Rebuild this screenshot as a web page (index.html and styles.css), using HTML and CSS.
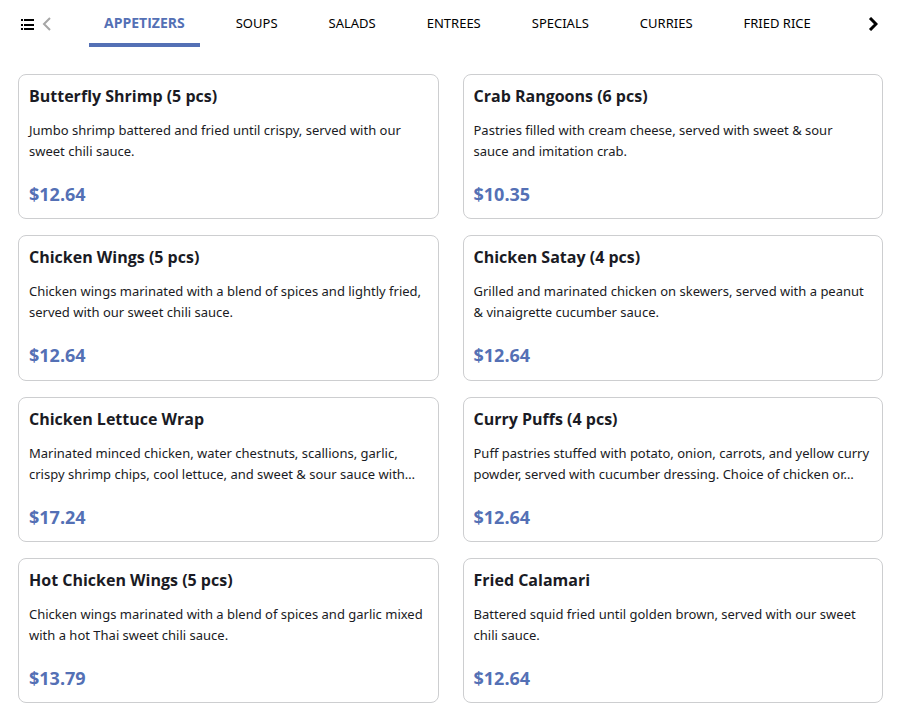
FILE: index.html
```html
<!DOCTYPE html>
<html lang="en">
<head>
<meta charset="utf-8">
<meta name="viewport" content="width=device-width, initial-scale=1">
<title>Menu</title>
<link rel="stylesheet" href="styles.css">
</head>
<body>
<nav class="bar">
  <button class="icon-button" type="button" aria-label="All categories">
    <svg width="15" height="14" viewBox="0 0 15 14"><path d="M1 2h2v2H1zM1 7h2v2H1zM1 11h2v2H1zM4 2h10v2H4zM4 7h10v2H4zM4 11h10v2H4z"/></svg>
  </button>
  <button class="icon-button previous" type="button" aria-label="Previous categories">
    <svg width="10" height="14" viewBox="0 0 10 14"><path class="chevron" d="M8 1 2 7l6 6"/></svg>
  </button>
  <div class="tabs">
    <a class="tab active" href="#appetizers">APPETIZERS</a>
    <a class="tab" href="#soups">SOUPS</a>
    <a class="tab" href="#salads">SALADS</a>
    <a class="tab" href="#entrees">ENTREES</a>
    <a class="tab" href="#specials">SPECIALS</a>
    <a class="tab" href="#curries">CURRIES</a>
    <a class="tab" href="#fried-rice">FRIED RICE</a>
  </div>
  <button class="icon-button next" type="button" aria-label="Next categories">
    <svg width="10" height="14" viewBox="0 0 10 14"><path class="chevron" d="m2 1 6 6-6 6"/></svg>
  </button>
</nav>
<main class="menu" id="appetizers">
  <article class="card">
    <h2 class="name">Butterfly Shrimp (5 pcs)</h2>
    <p class="description">Jumbo shrimp battered and fried until crispy, served with our sweet chili sauce.</p>
    <p class="price">$12.64</p>
  </article>
  <article class="card">
    <h2 class="name">Crab Rangoons (6 pcs)</h2>
    <p class="description">Pastries filled with cream cheese, served with sweet &amp; sour<br>sauce and imitation crab.</p>
    <p class="price">$10.35</p>
  </article>
  <article class="card">
    <h2 class="name">Chicken Wings (5 pcs)</h2>
    <p class="description">Chicken wings marinated with a blend of spices and lightly fried, served with our sweet chili sauce.</p>
    <p class="price">$12.64</p>
  </article>
  <article class="card">
    <h2 class="name">Chicken Satay (4 pcs)</h2>
    <p class="description">Grilled and marinated chicken on skewers, served with a peanut &amp; vinaigrette cucumber sauce.</p>
    <p class="price">$12.64</p>
  </article>
  <article class="card">
    <h2 class="name">Chicken Lettuce Wrap</h2>
    <p class="description">Marinated minced chicken, water chestnuts, scallions, garlic, crispy shrimp chips, cool lettuce, and sweet &amp; sour sauce with…</p>
    <p class="price">$17.24</p>
  </article>
  <article class="card">
    <h2 class="name">Curry Puffs (4 pcs)</h2>
    <p class="description">Puff pastries stuffed with potato, onion, carrots, and yellow curry powder, served with cucumber dressing. Choice of chicken or…</p>
    <p class="price">$12.64</p>
  </article>
  <article class="card">
    <h2 class="name">Hot Chicken Wings (5 pcs)</h2>
    <p class="description">Chicken wings marinated with a blend of spices and garlic mixed with a hot Thai sweet chili sauce.</p>
    <p class="price">$13.79</p>
  </article>
  <article class="card">
    <h2 class="name">Fried Calamari</h2>
    <p class="description">Battered squid fried until golden brown, served with our sweet chili sauce.</p>
    <p class="price">$12.64</p>
  </article>
</main>
</body>
</html>
```

FILE: styles.css
```css
* {
  box-sizing: border-box;
}

body {
  display: flex;
  flex-direction: column;
  min-height: 100vh;
  margin: 0;
  background: #fff;
  color: #1a1b24;
  font-family: "Open Sans", "Noto Sans", sans-serif;
}

.bar {
  display: flex;
  align-items: flex-start;
  padding: 0 26px 0 20px;
}

.icon-button {
  display: flex;
  align-items: center;
  height: 47px;
  padding: 0;
  border: 0;
  background: none;
  color: #000;
}

.previous {
  margin-left: 7px;
  color: #a6a6a6;
}

.chevron {
  fill: none;
  stroke: currentColor;
  stroke-width: 2;
}

.next .chevron {
  stroke-width: 3;
}

.tabs {
  display: flex;
  flex: 1;
  gap: 21px;
  margin-left: 37px;
}

.tab {
  height: 47px;
  padding: 0 15px;
  border-bottom: 4px solid transparent;
  color: #000;
  font-family: "Noto Sans", sans-serif;
  font-size: 13px;
  line-height: 46px;
  text-decoration: none;
  white-space: nowrap;
}

.active {
  border-color: #5470b5;
  color: #5470b5;
  font-family: "Open Sans", sans-serif;
  font-size: 14px;
  font-weight: 700;
}

.menu {
  display: grid;
  flex: 1;
  grid-template-columns: 1fr 1fr;
  grid-auto-rows: 1fr;
  gap: 16px 24px;
  padding: 27px 21px 12px 18px;
}

.card {
  padding: 9px 10px;
  border: 1px solid #cdced0;
  border-radius: 8px;
}

.name,
.description,
.price {
  margin: 0;
}

.name {
  font-size: 16px;
  line-height: 25px;
}

.description {
  min-height: 42px;
  margin-top: 11px;
  font-family: "Noto Sans", sans-serif;
  font-size: 13px;
  line-height: 21px;
}

.price {
  margin-top: 18px;
  color: #5470b5;
  font-size: 18px;
  font-weight: 700;
  line-height: 28px;
}
```
